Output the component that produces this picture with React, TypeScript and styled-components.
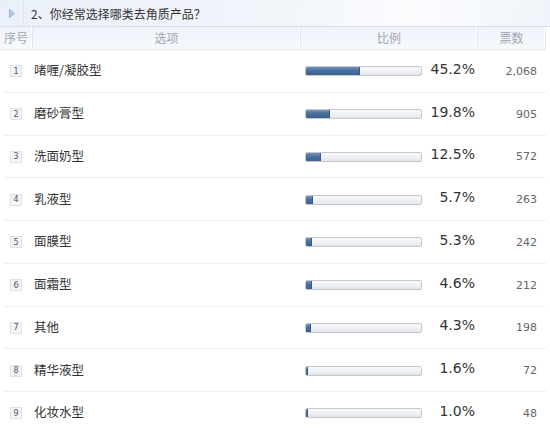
import React from "react";
import styled, { createGlobalStyle } from "styled-components";

const Global = createGlobalStyle`
  html, body { margin: 0; padding: 0; background: #fff; }
  body { font-family: "Liberation Sans", Arial, "Noto Sans CJK SC", sans-serif; }
`;

const Wrap = styled.div`
  width: 550px;
  height: 434px;
  overflow: hidden;
  background: #fff;
`;

const TitleBar = styled.div`
  height: 26px;
  display: flex;
  align-items: center;
  background: linear-gradient(100deg, #eaf0f9 0%, #f3f6fb 55%, #fbfcfe 75%, #f0f4fa 100%);
  border-bottom: 1px solid #d6deea;
`;

const IconCell = styled.div`
  width: 24px;
  height: 26px;
  display: flex;
  align-items: center;
  justify-content: center;
  border-right: 1px solid #dde4ee;
  box-sizing: border-box;
`;

const Title = styled.div`
  padding-left: 7px;
  font-size: 12px;
  color: #333;
  line-height: 14px;
  margin-top: 1px;
  font-family: "Noto Sans CJK SC", sans-serif;
`;

const Table = styled.div`
  width: 546px;
`;

const HeadRow = styled.div`
  display: grid;
  grid-template-columns: 33px 268px 177px 68px;
  height: 22px;
  background: linear-gradient(180deg, #eef3fb 0%, #f7f9fd 100%);
  border-bottom: 1px solid #e6e9ee;
`;

const HeadCell = styled.div`
  display: flex;
  align-items: center;
  justify-content: center;
  font-size: 12px;
  line-height: 14px;
  color: #a0a8b2;
  font-family: "Noto Sans CJK SC", sans-serif;
  border-right: 1px solid #e3e7ee;
  box-shadow: inset -1px 0 0 #fff;
`;

const Row = styled.div`
  display: grid;
  grid-template-columns: 33px 268px 177px 68px;
  height: 42.75px;
  align-items: center;
  position: relative;
  &:not(:last-child)::after {
    content: "";
    position: absolute;
    left: 4px;
    right: 0;
    bottom: 0;
    height: 1px;
    background: #eceef1;
  }
`;

const NumCell = styled.div`
  display: flex;
  justify-content: center;
  padding-right: 1px;
`;

const Badge = styled.span`
  width: 12px;
  height: 12px;
  box-sizing: border-box;
  border: 1px solid #dfe3e8;
  background: #f2f4f7;
  font-size: 8px;
  color: #555;
  display: flex;
  align-items: center;
  justify-content: center;
  font-family: "DejaVu Sans", sans-serif;
`;

const Option = styled.div`
  font-size: 12.5px;
  line-height: 14px;
  color: #333;
  padding-left: 1px;
  margin-top: -2px;
  font-family: "Noto Sans CJK SC", sans-serif;
`;

const RatioCell = styled.div`
  display: flex;
  align-items: center;
`;

const Bar = styled.div`
  margin-left: 4px;
  width: 117px;
  height: 10px;
  box-sizing: border-box;
  border: 1px solid #c4c9cf;
  border-radius: 2px;
  background: linear-gradient(180deg, #f8f9fb 0%, #eef0f4 60%, #e2e5ea 100%);
  overflow: hidden;
  display: flex;
`;

const Fill = styled.div`
  height: 100%;
  background: linear-gradient(180deg, #7895bb 0%, #4a6e9e 45%, #3c6191 100%);
  border-right: 1px solid #37598a;
  box-sizing: border-box;
`;

const Pct = styled.div`
  width: 53px;
  text-align: right;
  font-size: 14px;
  color: #333;
  font-family: "DejaVu Sans", sans-serif;
  margin-top: -5px;
`;

const Votes = styled.div`
  text-align: right;
  padding-right: 9px;
  font-size: 11px;
  color: #666;
  font-family: "DejaVu Sans", sans-serif;
`;

const data = [
  ["啫喱/凝胶型", 45.2, "2,068"],
  ["磨砂膏型", 19.8, "905"],
  ["洗面奶型", 12.5, "572"],
  ["乳液型", 5.7, "263"],
  ["面膜型", 5.3, "242"],
  ["面霜型", 4.6, "212"],
  ["其他", 4.3, "198"],
  ["精华液型", 1.6, "72"],
  ["化妆水型", 1.0, "48"],
] as const;

export default function App() {
  return (
    <Wrap>
      <Global />
      <TitleBar>
        <IconCell>
          <svg width="6" height="9" viewBox="0 0 6 9">
            <path d="M0.5 0.5 L5.5 4.5 L0.5 8.5 Z" fill="#b9cbe3" stroke="#8aa6cc" strokeWidth="0.8" />
          </svg>
        </IconCell>
        <Title>2、你经常选择哪类去角质产品？</Title>
      </TitleBar>
      <Table>
        <HeadRow>
          <HeadCell>序号</HeadCell>
          <HeadCell>选项</HeadCell>
          <HeadCell>比例</HeadCell>
          <HeadCell>票数</HeadCell>
        </HeadRow>
        {data.map(([name, pct, votes], i) => (
          <Row key={i}>
            <NumCell>
              <Badge>{i + 1}</Badge>
            </NumCell>
            <Option>{name}</Option>
            <RatioCell>
              <Bar>
                <Fill style={{ width: `${Math.max(pct * 1.04, 1.5)}%` }} />
              </Bar>
              <Pct>{pct.toFixed(1)}%</Pct>
            </RatioCell>
            <Votes>{votes}</Votes>
          </Row>
        ))}
      </Table>
    </Wrap>
  );
}
